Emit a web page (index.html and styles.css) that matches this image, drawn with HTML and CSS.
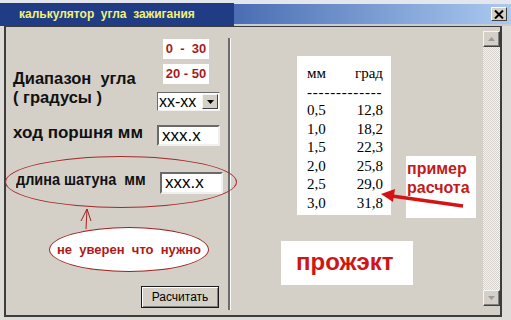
FILE: index.html
```html
<!DOCTYPE html>
<html lang="ru">
<head>
    <meta charset="UTF-8">
    <title>калькулятор угла зажигания</title>
    <link rel="stylesheet" href="styles.css">
</head>
<body>
    <div class="window">
        <div class="titlebar">
            <div class="caption">калькулятор  угла  зажигания</div>
            <div class="caption-rest">
                <span class="close">
                    <svg width="10" height="9" viewBox="0 0 10 9"><path d="M1 0.5 L9 8.5 M9 0.5 L1 8.5" stroke="#000" stroke-width="2"/></svg>
                </span>
            </div>
        </div>

        <div class="frame">
            <div class="left">
                <div class="range-group">
                    <div class="range-labels">
                        <span class="label">Диапазон  угла</span>
                        <span class="label">( градусы )</span>
                    </div>
                    <div class="range-fields">
                        <div class="range-box">0  -  30</div>
                        <div class="range-box">20 - 50</div>
                        <div class="select">
                            <span class="select-value">xx-xx</span>
                            <span class="select-btn">
                                <svg width="7" height="4" viewBox="0 0 7 4"><path d="M0 0 H7 L3.5 4 Z" fill="#000"/></svg>
                            </span>
                        </div>
                    </div>
                </div>

                <div class="field-row">
                    <span class="label">ход поршня мм</span>
                    <div class="input">xxx.x</div>
                </div>

                <div class="field-row rod">
                    <span class="label label-narrow">длина шатуна  мм</span>
                    <div class="input">xxx.x</div>
                </div>

                <div class="actions">
                    <button class="calc">Расчитать</button>
                </div>
            </div>

            <div class="divider"></div>

            <div class="right">
                <div class="sample">
                    <div class="sample-row"><span>мм</span><span>град</span></div>
                    <div class="dashes">-------------</div>
                    <div class="sample-row"><span>0,5</span><span>12,8</span></div>
                    <div class="sample-row"><span>1,0</span><span>18,2</span></div>
                    <div class="sample-row"><span>1,5</span><span>22,3</span></div>
                    <div class="sample-row"><span>2,0</span><span>25,8</span></div>
                    <div class="sample-row"><span>2,5</span><span>29,0</span></div>
                    <div class="sample-row"><span>3,0</span><span>31,8</span></div>
                </div>
                <div class="project">прожэкт</div>
                <div class="note-example">пример<br>расчота</div>
            </div>

            <div class="scrollbar">
                <div class="scroll-btn">
                    <svg width="7" height="4" viewBox="0 0 7 4"><path d="M0 4 H7 L3.5 0 Z" fill="#9a9a9a"/></svg>
                </div>
                <div class="scroll-track"></div>
                <div class="scroll-btn">
                    <svg width="7" height="4" viewBox="0 0 7 4"><path d="M0 0 H7 L3.5 4 Z" fill="#9a9a9a"/></svg>
                </div>
            </div>
        </div>

        <!-- annotations drawn over the form -->
        <div class="rod-ring"></div>
        <div class="bubble">не  уверен  что  нужно</div>
        <svg class="marks" width="511" height="320" viewBox="0 0 511 320">
            <path d="M86 229 L87 209 M81 221 L87 209 L91 221" stroke="#a52020" stroke-width="1" fill="none"/>
            <path d="M463 206 L392 196" stroke="#d41414" stroke-width="3.5"/>
            <polygon points="381,194 395,189 393,202" fill="#d41414"/>
        </svg>
    </div>
</body>
</html>
```

FILE: styles.css
```css
body {
    margin: 0;
    font-family: "Liberation Sans", Arial, sans-serif;
}
.window {
    position: relative;
    width: 511px;
    height: 320px;
    background: #dedcd8;
    display: flex;
    flex-direction: column;
    overflow: hidden;
}
.titlebar {
    height: 26px;
    padding-top: 3px;
    box-sizing: border-box;
    background: #e3e7ed;
    display: flex;
    align-items: flex-start;
}
.caption {
    width: 234px;
    height: 23px;
    padding-left: 19px;
    box-sizing: border-box;
    background: #1f3c85;
    color: #f2f27a;
    font-size: 12px;
    font-weight: bold;
    line-height: 23px;
    white-space: pre;
}
.caption-rest {
    flex: 1;
    height: 20px;
    margin-top: 1px;
    padding-right: 4px;
    background: linear-gradient(90deg, #4a6db3, #aacaf0);
    border-bottom: 2px solid #c9ccd2;
    display: flex;
    align-items: center;
    justify-content: flex-end;
}
.close {
    width: 16px;
    height: 14px;
    box-sizing: border-box;
    background: #d4d0c8;
    border: 1px solid;
    border-color: #fff #404040 #404040 #fff;
    display: flex;
    align-items: center;
    justify-content: center;
}
.frame {
    height: 291px;
    margin: 0 9px 0 4px;
    box-sizing: border-box;
    background: #d4d0c8;
    border: 2px solid #3d3d3d;
    border-top-width: 1px;
    display: flex;
}

/* left form */
.left {
    width: 222px;
    padding-left: 7px;
    box-sizing: border-box;
    display: flex;
    flex-direction: column;
}
.label {
    color: #111;
    font-size: 17px;
    font-weight: bold;
    line-height: 17px;
    white-space: pre;
}
.range-group {
    padding-top: 12px;
    display: flex;
    align-items: flex-end;
}
.range-labels {
    width: 144px;
    margin-bottom: 4px;
    display: flex;
    flex-direction: column;
}
.range-labels .label {
    font-size: 16.5px;
    line-height: 19px;
}
.range-fields {
    width: 63px;
    display: flex;
    flex-direction: column;
}
.range-box {
    width: 46px;
    height: 20px;
    margin-left: 6px;
    background: #fff;
    color: #a51c1c;
    font-size: 13px;
    font-weight: bold;
    line-height: 20px;
    text-align: center;
    white-space: pre;
}
.range-box + .range-box {
    margin-top: 5px;
}
.select {
    height: 19px;
    margin-top: 8px;
    box-sizing: border-box;
    background: #fff;
    border: 1px solid;
    border-color: #6a6a6a #f0f0f0 #f0f0f0 #6a6a6a;
    display: flex;
    align-items: center;
}
.select-value {
    flex: 1;
    padding-left: 1px;
    font-size: 16px;
}
.select-btn {
    width: 16px;
    height: 15px;
    margin-right: 1px;
    box-sizing: border-box;
    background: #d4d0c8;
    border: 1px solid;
    border-color: #f4f4f4 #404040 #404040 #f4f4f4;
    display: flex;
    align-items: center;
    justify-content: center;
}
.field-row {
    margin-top: 13px;
    display: flex;
    align-items: flex-start;
}
.field-row .label {
    width: 144px;
}
.field-row.rod {
    margin-top: 25px;
}
.label-narrow {
    display: inline-block;
    margin-left: 3px;
    transform: scaleX(0.85);
    transform-origin: 0 50%;
}
.input {
    width: 63px;
    height: 21px;
    margin-top: 1px;
    padding-left: 3px;
    box-sizing: border-box;
    background: #fff;
    border: 2px solid;
    border-color: #6a6a6a #f0f0f0 #f0f0f0 #6a6a6a;
    font-size: 17px;
    line-height: 17px;
}
.rod .input {
    height: 22px;
    line-height: 18px;
}
.actions {
    margin-top: auto;
    padding: 0 9px 7px 0;
    display: flex;
    justify-content: flex-end;
}
.calc {
    width: 78px;
    height: 22px;
    padding: 0;
    background: #d4d0c8;
    border: 1px solid #1a1a1a;
    box-shadow: inset 1px 1px #fff, inset -1px -1px #808080;
    color: #000;
    font-family: "Liberation Sans", Arial, sans-serif;
    font-size: 12px;
}
.divider {
    width: 0;
    margin: 11px 0 5px;
    border-left: 2px solid #6c6c6c;
    border-right: 1px solid #fafafa;
}

/* right side */
.right {
    position: relative;
    width: 252px;
    display: flex;
    flex-direction: column;
    align-items: flex-start;
}
.sample {
    width: 94px;
    margin: 29px 0 0 66px;
    padding: 8px 8px 3px 10px;
    box-sizing: border-box;
    background: #fff;
    color: #000;
    font-family: "Liberation Serif", "Times New Roman", serif;
    font-size: 15px;
    line-height: 18.5px;
}
.sample-row {
    display: flex;
    justify-content: space-between;
}
.dashes {
    letter-spacing: 0.8px;
    white-space: nowrap;
    overflow: hidden;
}
.project {
    width: 132px;
    height: 44px;
    margin: 26px 0 0 50px;
    padding-left: 15px;
    box-sizing: border-box;
    background: #fff;
    color: #d01515;
    font-size: 24px;
    font-weight: bold;
    line-height: 42px;
}
.note-example {
    position: absolute;
    left: 175px;
    top: 129px;
    width: 70px;
    height: 62px;
    padding: 3px 0 0 1px;
    box-sizing: border-box;
    background: #fff;
    color: #c41a1a;
    font-size: 16px;
    font-weight: bold;
    line-height: 19px;
}
.scrollbar {
    width: 17px;
    padding: 4px 0 9px;
    box-sizing: border-box;
    display: flex;
    flex-direction: column;
}
.scroll-btn {
    height: 16px;
    box-sizing: border-box;
    background: #d4d0c8;
    border: 1px solid;
    border-color: #f4f4f4 #404040 #404040 #f4f4f4;
    box-shadow: inset -1px -1px #808080;
    display: flex;
    align-items: center;
    justify-content: center;
}
.scroll-track {
    flex: 1;
    background: repeating-conic-gradient(#f4f3f1 0 25%, #d6d3ce 0 50%) 0 0 / 2px 2px;
}

/* annotations */
.rod-ring {
    position: absolute;
    left: 5px;
    top: 156px;
    width: 232px;
    height: 52px;
    box-sizing: border-box;
    border: 1px solid #a52a2a;
    border-radius: 50%;
}
.bubble {
    position: absolute;
    left: 49px;
    top: 227px;
    width: 160px;
    height: 45px;
    box-sizing: border-box;
    background: #fff;
    border: 1px solid #a02020;
    border-radius: 50%;
    color: #b01919;
    font-size: 13px;
    font-weight: bold;
    white-space: pre;
    display: flex;
    align-items: center;
    justify-content: center;
}
.marks {
    position: absolute;
    left: 0;
    top: 0;
    pointer-events: none;
}
```
